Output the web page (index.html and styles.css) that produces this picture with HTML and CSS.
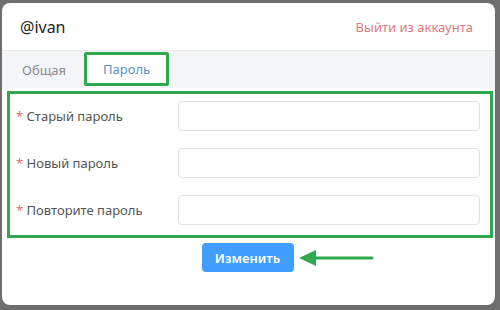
FILE: index.html
```html
<!DOCTYPE html>
<html lang="ru">
<head>
    <meta charset="UTF-8">
    <title>Профиль</title>
    <link rel="stylesheet" href="styles.css">
</head>
<body>
    <div class="modal">
        <header class="modal-head">
            <span class="user">@ivan</span>
            <a class="logout" href="#">Выйти из аккаунта</a>
        </header>
        <nav class="tabs">
            <span class="tab">Общая</span>
            <span class="tab active">Пароль</span>
        </nav>
        <form class="form">
            <div class="row">
                <label><span class="req">*</span> Старый пароль</label>
                <input type="password">
            </div>
            <div class="row">
                <label><span class="req">*</span> Новый пароль</label>
                <input type="password">
            </div>
            <div class="row">
                <label><span class="req">*</span> Повторите пароль</label>
                <input type="password">
            </div>
        </form>
        <div class="actions">
            <button class="btn" type="button">Изменить</button>
            <svg class="arrow" width="80" height="20" viewBox="0 0 80 20">
                <path d="M76 10 H16" stroke="#2fa84f" stroke-width="3" stroke-linecap="round"/>
                <path d="M3 10 L20 2 L20 18 Z" fill="#2fa84f"/>
            </svg>
        </div>
    </div>
</body>
</html>
```

FILE: styles.css
```css
body {
    margin: 0;
    background-color: #6e6e6e;
    font-family: "Noto Sans", "Open Sans", sans-serif;
    font-size: 13px;
    color: #555;
}

.modal {
    width: 493px;
    height: 302px;
    margin: 3px 0 0 2px;
    background: #fff;
    border-radius: 8px;
    overflow: hidden;
}

.modal-head {
    display: flex;
    justify-content: space-between;
    align-items: center;
    height: 47px;
    padding: 0 22px 0 18px;
}

.user {
    font-size: 16px;
    color: #222;
}

.logout {
    color: #de7a7f;
    text-decoration: none;
    font-size: 13px;
}

.tabs {
    display: flex;
    height: 37px;
    padding-left: 5px;
    background: #f4f5f9;
    border-top: 1px solid #e6e7ec;
}

.tab {
    display: flex;
    align-items: center;
    padding: 0 15px;
    color: #8a8a8a;
}

/* активная вкладка обведена зелёной рамкой */
.tab.active {
    margin-left: 3px;
    padding: 0 16px;
    color: #5b8fc9;
    background: #fff;
    border: 3px solid #2fa84f;
    border-radius: 2px;
    height: 34px;
    box-sizing: border-box;
    margin-top: 1px;
}

.form {
    margin: 3px 2px 0 5px;
    padding: 7px 10px 10px 6px;
    border: 3px solid #2fa84f;
    display: flex;
    flex-direction: column;
    gap: 17px;
}

.row {
    display: flex;
    align-items: center;
    justify-content: space-between;
}

.row label {
    color: #555;
    font-size: 13px;
}

.req {
    color: #e36b6b;
}

.row input {
    width: 302px;
    height: 30px;
    box-sizing: border-box;
    border: 1px solid #dfe1e6;
    border-radius: 4px;
}

.actions {
    display: flex;
    align-items: center;
    justify-content: center;
    margin-top: 5px;
    padding-left: 80px;
    gap: 2px;
}

.btn {
    width: 92px;
    height: 29px;
    border: none;
    border-radius: 4px;
    background: #409eff;
    color: #fff;
    font-family: inherit;
    font-size: 13px;
    font-weight: 600;
}
```
